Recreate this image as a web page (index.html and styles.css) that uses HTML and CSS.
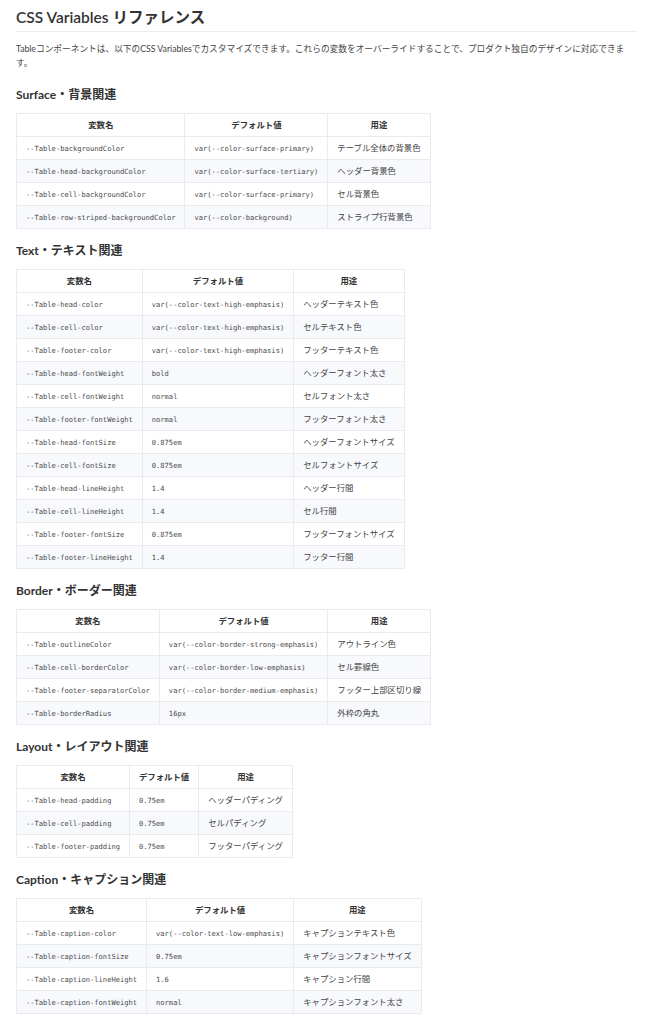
FILE: index.html
```html
<!DOCTYPE html>
<html lang="ja">
<head>
    <meta charset="UTF-8">
    <meta name="viewport" content="width=device-width, initial-scale=1.0">
    <title>CSS Variables リファレンス</title>
    <link rel="stylesheet" href="styles.css">
</head>
<body>
    <div class="page">
        <h1>CSS Variables リファレンス</h1>
        <p class="lead">Tableコンポーネントは、以下のCSS Variablesでカスタマイズできます。これらの変数をオーバーライドすることで、プロダクト独自のデザインに対応できます。</p>

        <h3>Surface・背景関連</h3>
        <table class="ref-table">
            <thead>
                <tr><th>変数名</th><th>デフォルト値</th><th>用途</th></tr>
            </thead>
            <tbody>
                <tr><td><code>--Table-backgroundColor</code></td><td><code>var(--color-surface-primary)</code></td><td>テーブル全体の背景色</td></tr>
                <tr><td><code>--Table-head-backgroundColor</code></td><td><code>var(--color-surface-tertiary)</code></td><td>ヘッダー背景色</td></tr>
                <tr><td><code>--Table-cell-backgroundColor</code></td><td><code>var(--color-surface-primary)</code></td><td>セル背景色</td></tr>
                <tr><td><code>--Table-row-striped-backgroundColor</code></td><td><code>var(--color-background)</code></td><td>ストライプ行背景色</td></tr>
            </tbody>
        </table>

        <h3>Text・テキスト関連</h3>
        <table class="ref-table">
            <thead>
                <tr><th>変数名</th><th>デフォルト値</th><th>用途</th></tr>
            </thead>
            <tbody>
                <tr><td><code>--Table-head-color</code></td><td><code>var(--color-text-high-emphasis)</code></td><td>ヘッダーテキスト色</td></tr>
                <tr><td><code>--Table-cell-color</code></td><td><code>var(--color-text-high-emphasis)</code></td><td>セルテキスト色</td></tr>
                <tr><td><code>--Table-footer-color</code></td><td><code>var(--color-text-high-emphasis)</code></td><td>フッターテキスト色</td></tr>
                <tr><td><code>--Table-head-fontWeight</code></td><td><code>bold</code></td><td>ヘッダーフォント太さ</td></tr>
                <tr><td><code>--Table-cell-fontWeight</code></td><td><code>normal</code></td><td>セルフォント太さ</td></tr>
                <tr><td><code>--Table-footer-fontWeight</code></td><td><code>normal</code></td><td>フッターフォント太さ</td></tr>
                <tr><td><code>--Table-head-fontSize</code></td><td><code>0.875em</code></td><td>ヘッダーフォントサイズ</td></tr>
                <tr><td><code>--Table-cell-fontSize</code></td><td><code>0.875em</code></td><td>セルフォントサイズ</td></tr>
                <tr><td><code>--Table-head-lineHeight</code></td><td><code>1.4</code></td><td>ヘッダー行間</td></tr>
                <tr><td><code>--Table-cell-lineHeight</code></td><td><code>1.4</code></td><td>セル行間</td></tr>
                <tr><td><code>--Table-footer-fontSize</code></td><td><code>0.875em</code></td><td>フッターフォントサイズ</td></tr>
                <tr><td><code>--Table-footer-lineHeight</code></td><td><code>1.4</code></td><td>フッター行間</td></tr>
            </tbody>
        </table>

        <h3>Border・ボーダー関連</h3>
        <table class="ref-table">
            <thead>
                <tr><th>変数名</th><th>デフォルト値</th><th>用途</th></tr>
            </thead>
            <tbody>
                <tr><td><code>--Table-outlineColor</code></td><td><code>var(--color-border-strong-emphasis)</code></td><td>アウトライン色</td></tr>
                <tr><td><code>--Table-cell-borderColor</code></td><td><code>var(--color-border-low-emphasis)</code></td><td>セル罫線色</td></tr>
                <tr><td><code>--Table-footer-separatorColor</code></td><td><code>var(--color-border-medium-emphasis)</code></td><td>フッター上部区切り線</td></tr>
                <tr><td><code>--Table-borderRadius</code></td><td><code>16px</code></td><td>外枠の角丸</td></tr>
            </tbody>
        </table>

        <h3>Layout・レイアウト関連</h3>
        <table class="ref-table">
            <thead>
                <tr><th>変数名</th><th>デフォルト値</th><th>用途</th></tr>
            </thead>
            <tbody>
                <tr><td><code>--Table-head-padding</code></td><td><code>0.75em</code></td><td>ヘッダーパディング</td></tr>
                <tr><td><code>--Table-cell-padding</code></td><td><code>0.75em</code></td><td>セルパディング</td></tr>
                <tr><td><code>--Table-footer-padding</code></td><td><code>0.75em</code></td><td>フッターパディング</td></tr>
            </tbody>
        </table>

        <h3>Caption・キャプション関連</h3>
        <table class="ref-table">
            <thead>
                <tr><th>変数名</th><th>デフォルト値</th><th>用途</th></tr>
            </thead>
            <tbody>
                <tr><td><code>--Table-caption-color</code></td><td><code>var(--color-text-low-emphasis)</code></td><td>キャプションテキスト色</td></tr>
                <tr><td><code>--Table-caption-fontSize</code></td><td><code>0.75em</code></td><td>キャプションフォントサイズ</td></tr>
                <tr><td><code>--Table-caption-lineHeight</code></td><td><code>1.6</code></td><td>キャプション行間</td></tr>
                <tr><td><code>--Table-caption-fontWeight</code></td><td><code>normal</code></td><td>キャプションフォント太さ</td></tr>
            </tbody>
        </table>
    </div>
</body>
</html>
```

FILE: styles.css
```css
body {
    margin: 0;
    background-color: #fff;
    color: #444;
    font-family: Lato, "Noto Sans CJK JP", sans-serif;
    font-size: 8.7px;
}
.page {
    padding: 7px 18px 0 16px;
}
h1 {
    margin: 0;
    padding-bottom: 4px;
    font-size: 15.5px;
    line-height: 20px;
    font-weight: 600;
    color: #333;
    border-bottom: 1px solid #ececec;
}
.lead {
    margin: 10px 0 18px;
    line-height: 14px;
}
h3 {
    margin: 15px 0 11px;
    font-size: 12px;
    line-height: 14px;
    font-weight: 700;
    color: #333;
}
.ref-table {
    border-collapse: collapse;
    border: 1px solid #e6e8eb;
    font-size: 8.4px;
}
.ref-table th,
.ref-table td {
    height: 12px;
    padding: 5px 9px;
    line-height: 11px;
    border: 1px solid #e9ebee;
    text-align: left;
    white-space: nowrap;
}
.ref-table th {
    text-align: center;
    font-weight: 700;
    color: #333;
}
.ref-table tbody tr:nth-child(even) {
    background-color: #f7f9fc;
}
code {
    font-family: "DejaVu Sans Mono", monospace;
    font-size: 7.1px;
    color: #4a4a4a;
}
```
